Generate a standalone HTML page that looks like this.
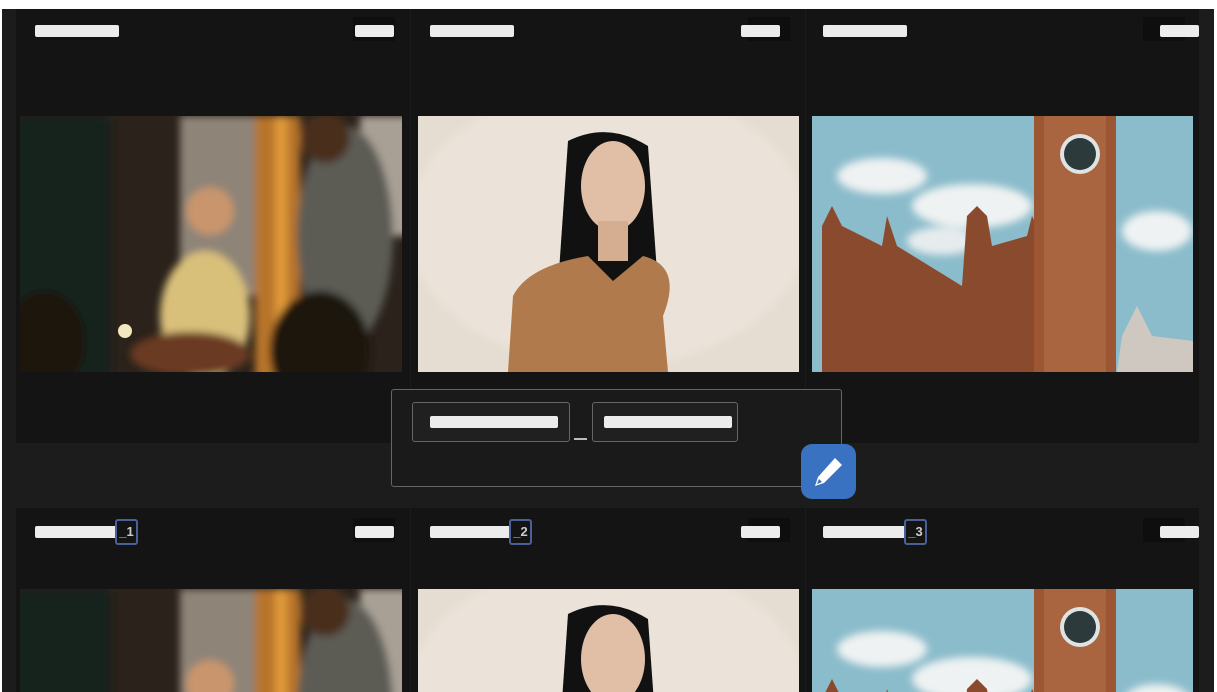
<!DOCTYPE html>
<html><head><meta charset="utf-8"><style>
*{margin:0;padding:0;box-sizing:border-box}
html,body{width:1217px;height:692px;overflow:hidden}
body{background:#fff;position:relative;font-family:"Liberation Sans",sans-serif}
.bg{position:absolute;left:2px;top:9px;width:1212px;height:683px;background:#1c1c1c}
.card{position:absolute;background:#141414}
.bar{position:absolute;background:#ececec;border-radius:2px;height:12px}
.dk{position:absolute;background:#0e0e0e}
.img{position:absolute;overflow:hidden;display:block}
.badge{position:absolute;width:23px;height:26px;border:2px solid #4b5f99;border-radius:3px;background:#141414;color:#ccc;font-size:13px;font-weight:bold;line-height:22px;text-align:center}
</style></head><body>
<div class="bg"></div>
<div class="card" style="left:16px;top:9px;width:394px;height:434px"></div>
<div class="card" style="left:411px;top:9px;width:394px;height:434px"></div>
<div class="card" style="left:806px;top:9px;width:393px;height:434px"></div>
<div class="card" style="left:16px;top:508px;width:394px;height:184px"></div>
<div class="card" style="left:411px;top:508px;width:394px;height:184px"></div>
<div class="card" style="left:806px;top:508px;width:393px;height:184px"></div>

<div class="bar" style="left:35px;top:25px;width:84px"></div>
<div class="dk" style="left:353px;top:17px;width:42px;height:24px"></div>
<div class="bar" style="left:355px;top:25px;width:39px"></div>
<div class="bar" style="left:430px;top:25px;width:84px"></div>
<div class="dk" style="left:748px;top:17px;width:42px;height:24px"></div>
<div class="bar" style="left:741px;top:25px;width:39px"></div>
<div class="bar" style="left:823px;top:25px;width:84px"></div>
<div class="dk" style="left:1143px;top:17px;width:42px;height:24px"></div>
<div class="bar" style="left:1160px;top:25px;width:39px"></div>

<div class="bar" style="left:35px;top:526px;width:84px"></div>
<div class="badge" style="left:115px;top:519px">_1</div>
<div class="dk" style="left:353px;top:518px;width:42px;height:24px"></div>
<div class="bar" style="left:355px;top:526px;width:39px"></div>
<div class="bar" style="left:430px;top:526px;width:84px"></div>
<div class="badge" style="left:509px;top:519px">_2</div>
<div class="dk" style="left:748px;top:518px;width:42px;height:24px"></div>
<div class="bar" style="left:741px;top:526px;width:39px"></div>
<div class="bar" style="left:823px;top:526px;width:84px"></div>
<div class="badge" style="left:904px;top:519px">_3</div>
<div class="dk" style="left:1143px;top:518px;width:42px;height:24px"></div>
<div class="bar" style="left:1160px;top:526px;width:39px"></div>

<svg width="0" height="0" style="position:absolute;left:0;top:0"><defs>
<filter id="bl"><feGaussianBlur stdDeviation="4"/></filter>
<g id="p1">
<rect width="382" height="256" fill="#2a221b"/>
<g filter="url(#bl)">
<rect x="-10" y="0" width="100" height="270" fill="#14201a"/>
<rect x="160" y="0" width="80" height="180" fill="#8e8478"/>
<rect x="235" y="0" width="45" height="270" fill="#b8742a"/>
<rect x="255" y="0" width="12" height="270" fill="#e09a3a"/>
<rect x="340" y="0" width="50" height="120" fill="#a9a095"/>
<ellipse cx="185" cy="200" rx="45" ry="65" fill="#d9c07a"/>
<circle cx="190" cy="95" r="24" fill="#c9956c"/>
<ellipse cx="325" cy="120" rx="48" ry="110" fill="#5b5c54"/>
<circle cx="305" cy="22" r="25" fill="#4a2f1f"/>
<ellipse cx="300" cy="235" rx="50" ry="60" fill="#1a1410"/>
<ellipse cx="25" cy="225" rx="40" ry="50" fill="#1c1410"/>
<ellipse cx="170" cy="238" rx="60" ry="22" fill="#6a3a20"/>
</g>
<circle cx="105" cy="215" r="7" fill="#f3e8c0"/>
</g>
<g id="p2">
<rect width="381" height="256" fill="#e6ddd2"/>
<ellipse cx="190" cy="110" rx="200" ry="140" fill="#ebe3d9" filter="url(#bl)"/>
<path d="M150 25 Q190 5 230 30 L240 170 L140 170 Z" fill="#111"/>
<ellipse cx="195" cy="70" rx="32" ry="45" fill="#e0bfa6"/>
<rect x="180" y="105" width="30" height="40" fill="#d5ae92"/>
<path d="M90 256 L95 180 Q110 150 170 140 L195 165 L225 140 Q265 150 245 200 L250 256 Z" fill="#b07a4d"/>
</g>
<g id="p3">
<rect width="381" height="256" fill="#8bbccb"/>
<g filter="url(#bl)">
<ellipse cx="70" cy="60" rx="45" ry="18" fill="#eef2f2"/>
<ellipse cx="160" cy="90" rx="60" ry="22" fill="#eef2f2"/>
<ellipse cx="130" cy="125" rx="35" ry="14" fill="#e6ecee"/>
<ellipse cx="345" cy="115" rx="35" ry="20" fill="#eef2f2"/>
</g>
<path d="M10 256 L10 110 L20 90 L30 110 L70 130 L75 100 L85 130 L150 170 L155 100 L165 90 L175 100 L180 130 L215 120 L220 100 L230 120 L230 256 Z" fill="#8a4a2e"/>
<rect x="222" y="0" width="82" height="256" fill="#9c5634"/>
<rect x="232" y="0" width="62" height="256" fill="#a9653f"/>
<circle cx="268" cy="38" r="20" fill="#dfe3e3"/>
<circle cx="268" cy="38" r="16" fill="#2c3a3c"/>
<path d="M305 256 L310 220 L325 190 L340 220 L381 225 L381 256 Z" fill="#cfc8c0"/>
</g>
</defs></svg>

<svg class="img" style="left:20px;top:116px" width="382" height="256"><use href="#p1"/></svg>
<svg class="img" style="left:418px;top:116px" width="381" height="256"><use href="#p2"/></svg>
<svg class="img" style="left:812px;top:116px" width="381" height="256"><use href="#p3"/></svg>
<svg class="img" style="left:20px;top:589px" width="382" height="103"><use href="#p1"/></svg>
<svg class="img" style="left:418px;top:589px" width="381" height="103"><use href="#p2"/></svg>
<svg class="img" style="left:812px;top:589px" width="381" height="103"><use href="#p3"/></svg>

<div style="position:absolute;left:391px;top:389px;width:451px;height:98px;border:1px solid #666;border-radius:3px;background:#1a1a1a"></div>
<div style="position:absolute;left:412px;top:402px;width:158px;height:40px;border:1px solid #666;border-radius:3px;background:#202020"></div>
<div class="bar" style="left:430px;top:416px;width:128px"></div>
<div style="position:absolute;left:574px;top:438px;width:13px;height:2px;background:#bbb"></div>
<div style="position:absolute;left:592px;top:402px;width:146px;height:40px;border:1px solid #666;border-radius:3px;background:#202020"></div>
<div class="bar" style="left:604px;top:416px;width:128px"></div>
<div style="position:absolute;left:801px;top:444px;width:55px;height:55px;background:#3a72c2;border-radius:11px"></div>
<svg style="position:absolute;left:811px;top:454px" width="36" height="36" viewBox="0 0 36 36">
<path d="M24 4 L31 11 L13 29 L4 32 L7 23 Z" fill="#fff"/>
<path d="M8 25 L11 28 L6 30 Z" fill="#3a72c2"/>
</svg>
</body></html>
